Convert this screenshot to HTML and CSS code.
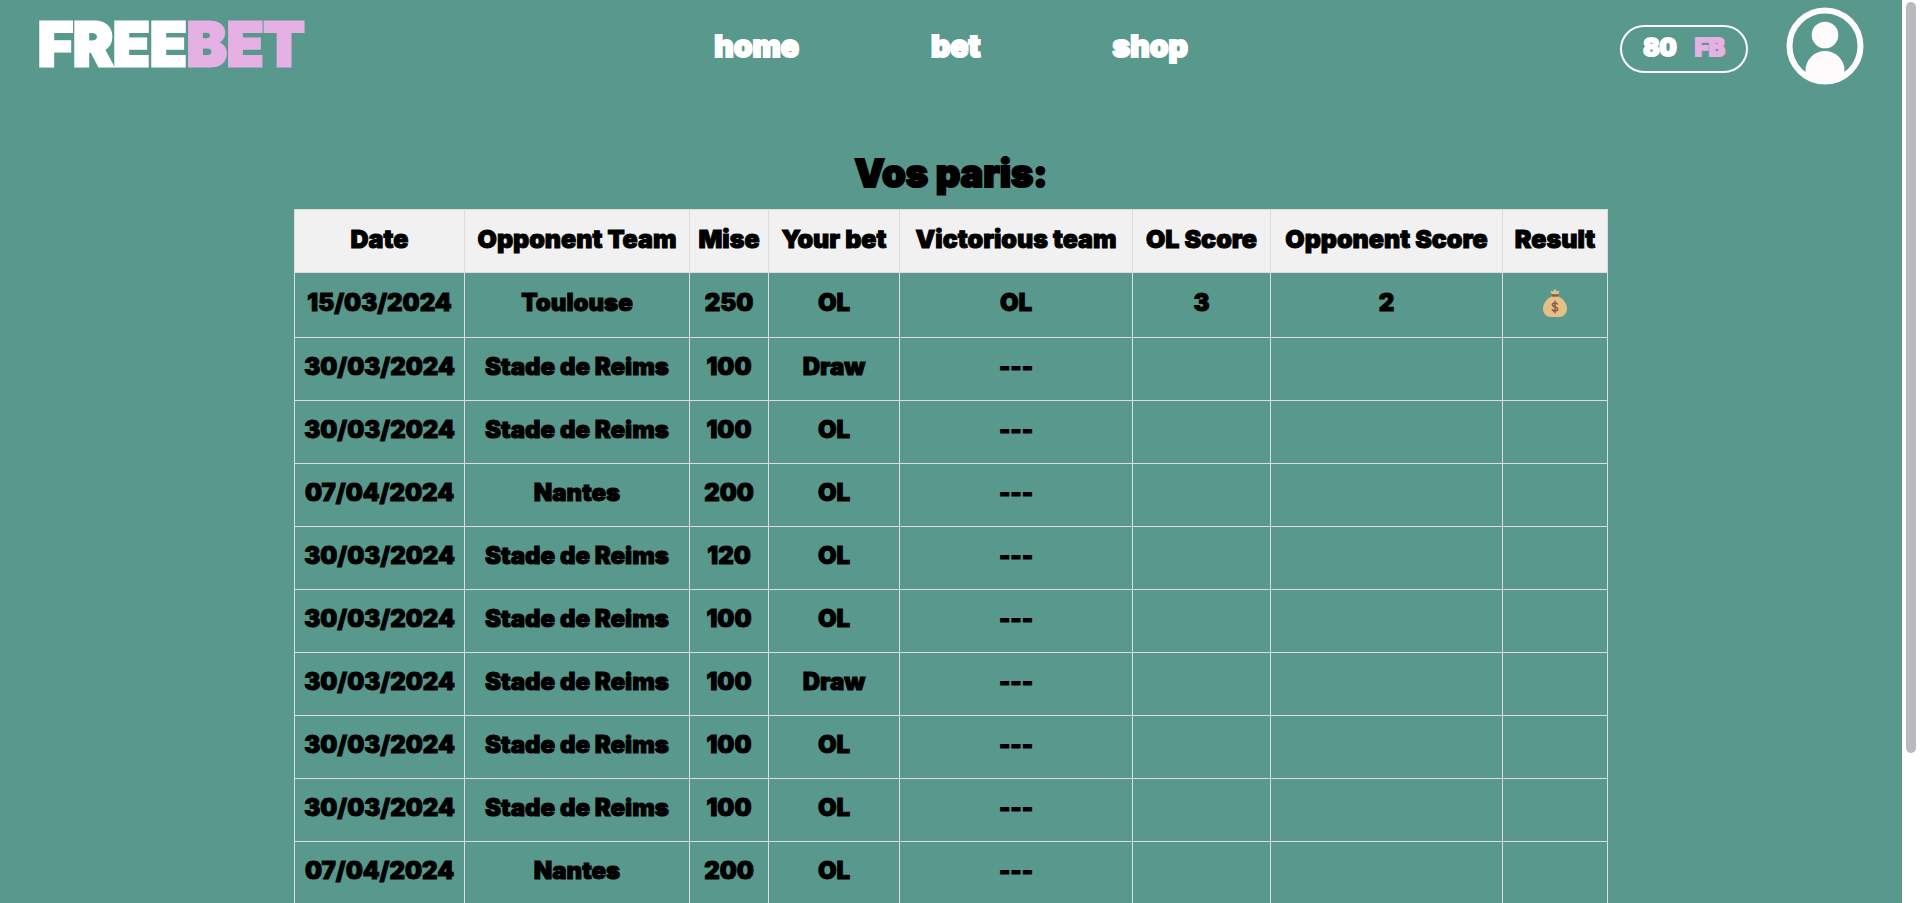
FILE: index.html
```html
<!DOCTYPE html>
<html lang="fr">
<head>
<meta charset="utf-8">
<title>FREEBET</title>
<link rel="stylesheet" href="styles.css">
</head>
<body>
<div class="app">
  <div class="page">
    <header class="header">
      <a class="logo" href="#">FREE<span class="pink">BET</span></a>
      <nav class="nav">
        <a href="#">home</a>
        <a href="#">bet</a>
        <a href="#">shop</a>
      </nav>
      <div class="account">
        <div class="balance"><span>80</span><span class="pink">FB</span></div>
        <a class="avatar" href="#" aria-label="Profile">
          <svg viewBox="0 0 78 78">
            <defs><clipPath id="disc"><circle cx="39" cy="39" r="37"/></clipPath></defs>
            <circle cx="39" cy="39" r="35.5" fill="none" stroke="#fdfbfc" stroke-width="6"/>
            <circle cx="39" cy="28" r="13.3" fill="#fdfbfc"/>
            <path clip-path="url(#disc)" fill="#fdfbfc" d="M19.500 78V63.500a19.500 19.500 0 0 1 39 0V78z"/>
          </svg>
        </a>
      </div>
    </header>
    <main class="main">
      <h1 class="title">Vos paris:</h1>
      <table class="bets">
        <colgroup><col class="c-date"><col class="c-team"><col class="c-stake"><col class="c-bet"><col class="c-winner"><col class="c-ol"><col class="c-opp"><col class="c-result"></colgroup>
        <thead>
          <tr><th>Date</th><th>Opponent Team</th><th>Mise</th><th>Your bet</th><th>Victorious team</th><th>OL Score</th><th>Opponent Score</th><th>Result</th></tr>
        </thead>
        <tbody>
          <tr class="won"><td>15/03/2024</td><td>Toulouse</td><td>250</td><td>OL</td><td>OL</td><td>3</td><td>2</td><td>
            <svg class="bag" viewBox="0 0 24 28" role="img" aria-label="Won">
              <path fill="#e4c085" d="M9 5.500 7.300 1.800l2.500.7L12 0l2.200 2.500 2.500-.7L15 5.500z"/>
              <path fill="#e4c085" d="M8.500 7.500h7C20 9.500 24 14.500 24 19.500S20.500 28 16 28H8c-4.500 0-8-3.500-8-8.500S4 9.500 8.500 7.500z"/>
              <rect x="8.500" y="5.300" width="7" height="2.200" rx="1" fill="#8c5a45"/>
              <path fill="none" stroke="#8c5a45" stroke-width="1.500" d="M14.600 15.600c-.3-1.200-1.300-1.700-2.600-1.700-1.500 0-2.600.7-2.600 1.900 0 2.900 5.300 1.400 5.300 4.300 0 1.300-1.200 2-2.700 2-1.400 0-2.500-.6-2.800-2M12 11.800v12.500"/>
            </svg></td></tr>
          <tr><td>30/03/2024</td><td>Stade de Reims</td><td>100</td><td>Draw</td><td>---</td><td></td><td></td><td></td></tr>
          <tr><td>30/03/2024</td><td>Stade de Reims</td><td>100</td><td>OL</td><td>---</td><td></td><td></td><td></td></tr>
          <tr><td>07/04/2024</td><td>Nantes</td><td>200</td><td>OL</td><td>---</td><td></td><td></td><td></td></tr>
          <tr><td>30/03/2024</td><td>Stade de Reims</td><td>120</td><td>OL</td><td>---</td><td></td><td></td><td></td></tr>
          <tr><td>30/03/2024</td><td>Stade de Reims</td><td>100</td><td>OL</td><td>---</td><td></td><td></td><td></td></tr>
          <tr><td>30/03/2024</td><td>Stade de Reims</td><td>100</td><td>Draw</td><td>---</td><td></td><td></td><td></td></tr>
          <tr><td>30/03/2024</td><td>Stade de Reims</td><td>100</td><td>OL</td><td>---</td><td></td><td></td><td></td></tr>
          <tr><td>30/03/2024</td><td>Stade de Reims</td><td>100</td><td>OL</td><td>---</td><td></td><td></td><td></td></tr>
          <tr><td>07/04/2024</td><td>Nantes</td><td>200</td><td>OL</td><td>---</td><td></td><td></td><td></td></tr>
        </tbody>
      </table>
    </main>
  </div>
  <div class="scrollbar"><div class="thumb"></div></div>
</div>
</body>
</html>
```
FILE: styles.css
```css
* { box-sizing: border-box; }
body {
  margin: 0;
  background: #58988d;
  color: #000;
  font-family: Inter, "Liberation Sans", sans-serif;
  font-weight: 900;
}
a { color: inherit; text-decoration: none; }
.app { display: flex; height: 100vh; overflow: hidden; }
.page { flex: 1; min-width: 0; overflow-y: auto; scrollbar-width: none; }
.scrollbar { width: 18px; padding: 2px 4px; background: #fff; }
.thumb { width: 10px; height: 83.5%; border-radius: 5px; background: #bab9be; }

.header {
  display: grid;
  grid-template-columns: 1fr auto 1fr;
  align-items: center;
  padding: 7px 38px;
  color: #fff;
}
.logo { padding-bottom: 4px; font-size: 60px; line-height: 72px; -webkit-text-stroke: 3px currentColor; }
.pink { color: #e5b0e4; }
.nav { display: flex; gap: 132px; font-size: 30px; line-height: 40px; -webkit-text-stroke: 2px currentColor; }
.account { display: flex; justify-content: flex-end; align-items: center; gap: 38px; }
.balance {
  display: flex;
  justify-content: center;
  gap: 18px;
  width: 128px;
  margin-top: 6px;
  padding: 6px 0 8px;
  border: 2px solid #fff;
  border-radius: 24px;
  font-size: 24px;
  line-height: 30px;
  -webkit-text-stroke: 2px currentColor;
}
.avatar { display: block; width: 78px; height: 78px; }
.avatar svg { display: block; }

.main { padding-top: 54px; }
.title {
  margin: 0 0 9px;
  font-size: 38px;
  font-weight: 900;
  line-height: 54px;
  text-align: center;
  -webkit-text-stroke: 2px currentColor;
}
.bets {
  width: 69%;
  margin: 0 auto;
  table-layout: fixed;
  border-collapse: collapse;
  font-size: 24px;
  line-height: 32px;
  text-align: center;
  white-space: nowrap;
}
.bets th, .bets td { height: 63px; padding: 12px 0 16px; border: 1px solid #ddd; font-weight: 900; -webkit-text-stroke: 1px currentColor; }
.bets th { background: #f1f1f1; font-size: 25px; }
.bets .won td { height: 65px; }
.c-date { width: 170px; }
.c-team { width: 225px; }
.c-stake { width: 79px; }
.c-bet { width: 131px; }
.c-winner { width: 233px; }
.c-ol { width: 138px; }
.c-opp { width: 232px; }
.c-result { width: 105px; }
.bag { display: block; width: 24px; height: 28px; margin: 0 auto; }
```
